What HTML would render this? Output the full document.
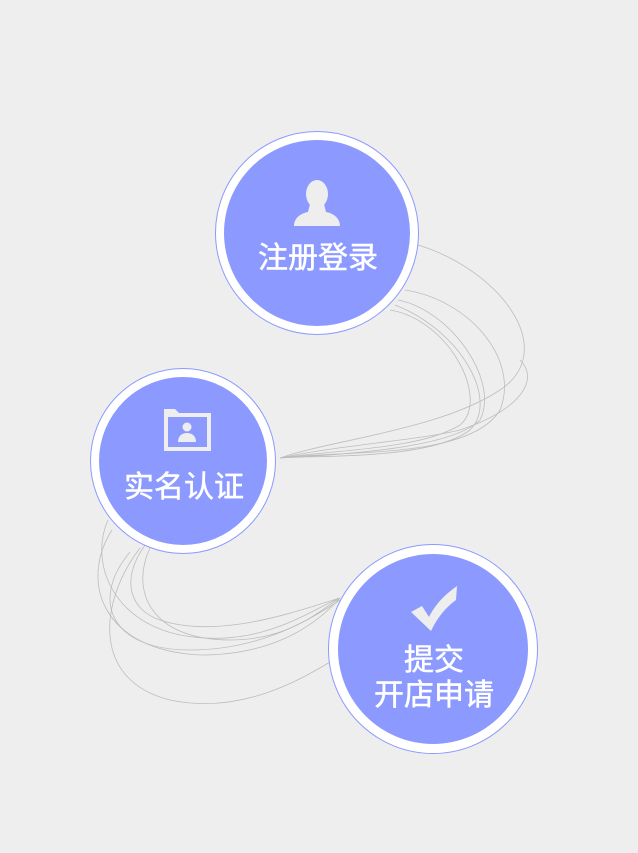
<!DOCTYPE html>
<html><head><meta charset="utf-8"><style>
html,body{margin:0;padding:0;background:#eeeeee;}
svg{display:block}
text{font-family:"Liberation Sans","Noto Sans CJK SC",sans-serif;fill:#fff;stroke:#fff;stroke-width:0.5;}
</style></head><body>
<svg width="638" height="853" viewBox="0 0 638 853" xmlns="http://www.w3.org/2000/svg">
<g fill="none" stroke="#bdbdbd" stroke-width="0.8">
<path d="M418 245 C500 270 560 350 500 390 C440 430 330 440 280 458"/>
<path d="M405 290 C470 300 520 360 500 410 C470 460 340 450 280 458"/>
<path d="M398 300 C450 310 500 380 480 420 C450 450 330 455 280 458"/>
<path d="M395 305 C460 330 500 400 470 430 C430 460 320 455 280 458"/>
<path d="M390 310 C450 320 490 400 460 425 C420 450 330 450 280 458"/>
<path d="M280 458 C340 445 420 440 460 430 C520 410 540 380 520 360"/>
<path d="M108 520 C90 560 110 620 180 635 C260 650 310 610 340 598"/>
<path d="M112 530 C80 580 100 650 200 655 C280 655 320 620 340 598"/>
<path d="M145 545 C120 580 130 610 160 620 C220 640 300 610 340 598"/>
<path d="M150 548 C130 590 150 640 230 640 C290 640 320 610 340 598"/>
<path d="M140 548 C100 600 90 680 170 700 C240 715 300 680 330 662"/>
<path d="M130 552 C90 600 110 650 190 650 C260 650 310 620 340 600"/>
</g>
<circle cx="317" cy="233" r="101.5" fill="#fff" stroke="#8c9aff" stroke-width="1"/>
<circle cx="317" cy="233" r="93" fill="#8c9aff"/>
<circle cx="183" cy="461" r="92.5" fill="#fff" stroke="#8c9aff" stroke-width="1"/>
<circle cx="183" cy="461" r="84" fill="#8c9aff"/>
<circle cx="433" cy="649" r="104.5" fill="#fff" stroke="#8c9aff" stroke-width="1"/>
<circle cx="433" cy="649" r="95" fill="#8c9aff"/>
<g fill="#eeeeee">
<ellipse cx="317" cy="194" rx="11" ry="14"/>
<path d="M310 204 L324 204 L326 212 C336 214 340 220 340 226 L294 226 C294 220 298 214 308 212 Z"/>
</g>
<g>
<path d="M164 409 L175 409 L179 413 L211 413 L211 451 L164 451 Z" fill="#eeeeee"/>
<rect x="168" y="417" width="39" height="30" fill="#8c9aff"/>
<circle cx="187" cy="427" r="4.5" fill="#eeeeee"/>
<path d="M178 442 C178 436 182 433 187 433 C192 433 196 436 196 442 Z" fill="#eeeeee"/>
</g>
<path d="M411 612 L422 606 L429 617 C436 603 446 594 457 586 L456 600 C446 607 437 618 431 631 Z" fill="#eeeeee"/>
<text x="318" y="268" font-size="30" text-anchor="middle">注册登录</text>
<text x="184" y="497" font-size="30" text-anchor="middle">实名认证</text>
<text x="434" y="670" font-size="30" text-anchor="middle">提交</text>
<text x="434" y="705" font-size="30" text-anchor="middle">开店申请</text>
</svg>
</body></html>
